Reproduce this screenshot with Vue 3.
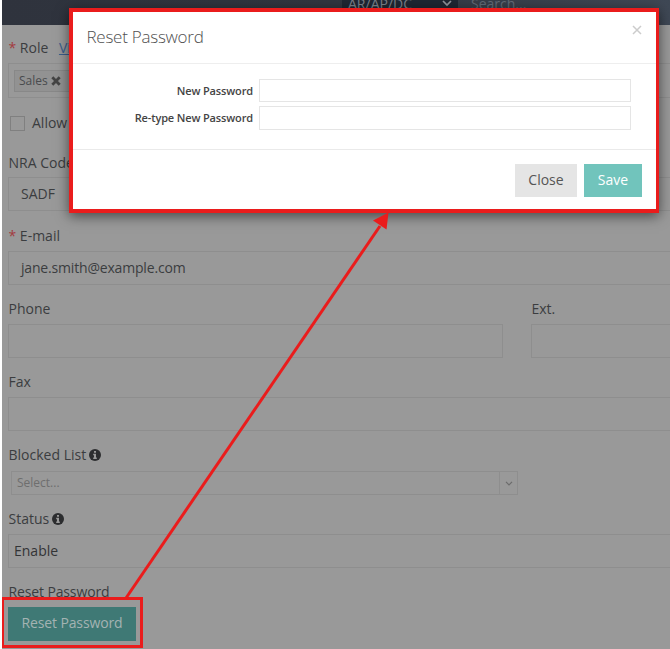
<script setup>
import { ref } from 'vue'

const email = ref('jane.smith@example.com')
const code = ref('SADF')
</script>

<template>
  <div class="page">
    <header class="topbar">
      <div class="scope"><span>AR/AP/DC</span>
        <svg class="scope-arrow" width="10" height="7" viewBox="0 0 10 7"><path d="M1 1l4 4 4-4" /></svg>
      </div>
      <span class="search">Search...</span>
    </header>

    <main class="form">
      <div class="label"><i class="req">*</i> Role <a class="view">View</a></div>
      <div class="field roles">
        <span class="tag">Sales
          <svg width="10" height="10" viewBox="0 0 10 10"><path d="M1.3 1.3l7.4 7.4M8.7 1.3l-7.4 7.4" /></svg>
        </span>
      </div>
      <div class="check"><span class="box"></span>Allow</div>
      <div class="label">NRA Code</div>
      <div class="field">{{ code }}</div>
      <div class="label email"><i class="req">*</i> E-mail</div>
      <div class="field mail">{{ email }}</div>
      <div class="split">
        <div class="phone">
          <div class="label">Phone</div>
          <div class="field"></div>
        </div>
        <div class="ext">
          <div class="label">Ext.</div>
          <div class="field"></div>
        </div>
      </div>
      <div class="label fax">Fax</div>
      <div class="field"></div>
      <div class="label">Blocked List
        <svg class="info" width="12" height="12" viewBox="0 0 12 12"><circle cx="6" cy="6" r="6" /><path d="M5 2h2v1.7H5zM4.2 4.8H7v3.7h.8V10H4.2V8.5H5V6.2h-.8z" /></svg>
      </div>
      <div class="select"><span>Select...</span>
        <div class="caret"><svg width="8" height="5" viewBox="0 0 8 5"><path d="M1 .8l3 3 3-3" /></svg></div>
      </div>
      <div class="label">Status
        <svg class="info" width="12" height="12" viewBox="0 0 12 12"><circle cx="6" cy="6" r="6" /><path d="M5 2h2v1.7H5zM4.2 4.8H7v3.7h.8V10H4.2V8.5H5V6.2h-.8z" /></svg>
      </div>
      <div class="field status">Enable</div>
      <div class="label tight">Reset Password</div>
      <button class="reset">Reset Password</button>
    </main>

    <section class="modal">
      <div class="modal-head">
        <h1>Reset Password</h1>
        <svg class="close-x" width="10" height="10" viewBox="0 0 10 10"><path d="M1 1l8 8M9 1l-8 8" /></svg>
      </div>
      <div class="modal-body">
        <label>New Password</label><input type="password">
        <label>Re-type New Password</label><input type="password">
      </div>
      <div class="modal-foot">
        <button>Close</button>
        <button class="save">Save</button>
      </div>
    </section>

    <div class="highlight"></div>
    <svg class="arrow" width="670" height="649" viewBox="0 0 670 649">
      <path class="shaft" d="M126 598L380 226" />
      <path class="head" d="M388.5 212.5L386.5 229.5L373 220.5Z" />
    </svg>
  </div>
</template>

<style>
body { margin: 0; overflow: hidden; }
</style>

<style scoped>
.page, .page * { box-sizing: border-box; }
.page {
  position: relative;
  width: 670px;
  height: 649px;
  overflow: hidden;
  border-left: 2px solid #fff;
  background: #999;
  color: #3b3d40;
  font: 14px/20px "Open Sans", "Noto Sans", sans-serif;
}
.topbar {
  display: flex;
  height: 25px;
  padding-left: 340px;
  background: linear-gradient(90deg, #2f333d, #303640 50%, #3f4855);
  color: #7c828b;
}
.scope {
  display: flex;
  justify-content: space-between;
  width: 116px;
  padding: 0 6px;
  background: #1f2733;
  line-height: 7px;
}
.scope-arrow { fill: none; stroke: #8f959c; stroke-width: 1.7; }
.search { padding-left: 13px; line-height: 8px; color: #626b77; }
.form { width: 760px; padding: 13px 0 0 6px; }
.label { height: 20px; margin: 15px 0 4px; padding-left: .5px; white-space: nowrap; }
.form > .label:first-child { margin: 0 0 5px; }
.req { color: #a33b3e; font-style: normal; }
.view { margin-left: 7px; color: #3c5f8c; text-decoration: underline; }
.field { height: 34px; padding: 0 12px; border: 1px solid #8e8e8e; line-height: 32px; }
.mail { letter-spacing: -.18px; }
.roles { display: flex; height: 35px; padding: 6px 5px; }
.tag {
  display: flex;
  align-items: center;
  gap: 3px;
  height: 22px;
  padding: 0 8px 0 4px;
  border: 1px solid #888;
  background: #929292;
  font-size: 12px;
  color: #494b4e;
}
.tag svg { fill: none; stroke: #444; stroke-width: 2.8; }
.check { display: flex; align-items: center; gap: 7px; height: 20px; margin: 15px 0 19px 2px; }
.box { width: 15px; height: 15px; border: 1.5px solid #808080; margin-top: 1px; }
.check + .label { margin-top: 20px; }
.email { margin: 15px 0 5px; }
.split { display: flex; gap: 28px; margin-top: 14px; }
.phone { flex: 0 0 495px; }
.ext { flex: 0 0 237px; }
.split .label { margin: 0 0 5px; }
.fax { margin: 14px 0 5px; }
.fax + .field + .label { margin: 14px 0 6px; }
.info { margin-left: -1px; vertical-align: -1px; fill: #2c2d2f; }
.info path { fill: #999; }
.select {
  display: flex;
  justify-content: space-between;
  width: 507px;
  height: 24px;
  margin-left: 3px;
  padding-left: 5px;
  border: 1px solid #8e8e8e;
  color: #6e6e6e;
  font-size: 12px;
  line-height: 22px;
}
.caret { display: grid; place-items: center; width: 18px; border-left: 1px solid #8e8e8e; }
.caret svg { fill: none; stroke: #6c6c6c; stroke-width: 1.2; }
.select + .label { margin: 14px 0 5px; }
.status { padding-left: 5px; color: #333436; }
.status + .label { margin: 14px 0 5px; }
.tight { letter-spacing: -.13px; }
button { border: 0; padding: 0; font: inherit; }
.reset { display: block; width: 128px; height: 34px; padding-bottom: 2px; background: #3f7975; color: #a4b3b2; letter-spacing: -.13px; }
.modal {
  position: absolute;
  top: 8px;
  left: 67px;
  width: 590px;
  height: 205px;
  border: 4px solid #ea1c1c;
  border-right-width: 3px;
  background: #fff;
  box-shadow: 0 3px 12px rgba(0, 0, 0, .55);
}
.modal-head {
  display: flex;
  justify-content: space-between;
  height: 52px;
  padding: 13px 14px 0 13.5px;
  border-bottom: 1px solid #eee;
}
h1 { margin: 0; color: #505050; font-size: 17px; font-weight: 300; line-height: 24px; letter-spacing: -.25px; }
.close-x { fill: none; stroke: #ccc; stroke-width: 1.5; }
.modal-body {
  display: grid;
  grid-template-columns: 180px 372px;
  grid-template-rows: 23px 24px;
  gap: 4px 6px;
  height: 86px;
  padding-top: 15px;
  border-bottom: 1px solid #eaeaea;
}
label { color: #444; font-size: 11px; font-weight: 600; line-height: 23px; letter-spacing: -.14px; text-align: right; }
input { width: 100%; height: 100%; padding: 0; border: 1px solid #e5e5e5; background: #fff; }
.modal-foot { display: flex; justify-content: flex-end; gap: 7px; padding: 14px 14px 0; }
.modal-foot button { width: 62px; height: 33px; padding-bottom: 2px; background: #e5e5e5; color: #555; }
.modal-foot .save { width: 58px; background: #71c4bc; color: #fff; }
.highlight { position: absolute; top: 597px; left: -1px; width: 142px; height: 51px; border: 3px solid #ea1c1c; }
.arrow { position: absolute; top: 0; left: -2px; }
.shaft { fill: none; stroke: #ea1c1c; stroke-width: 3; }
.head { fill: #ea1c1c; }
</style>
